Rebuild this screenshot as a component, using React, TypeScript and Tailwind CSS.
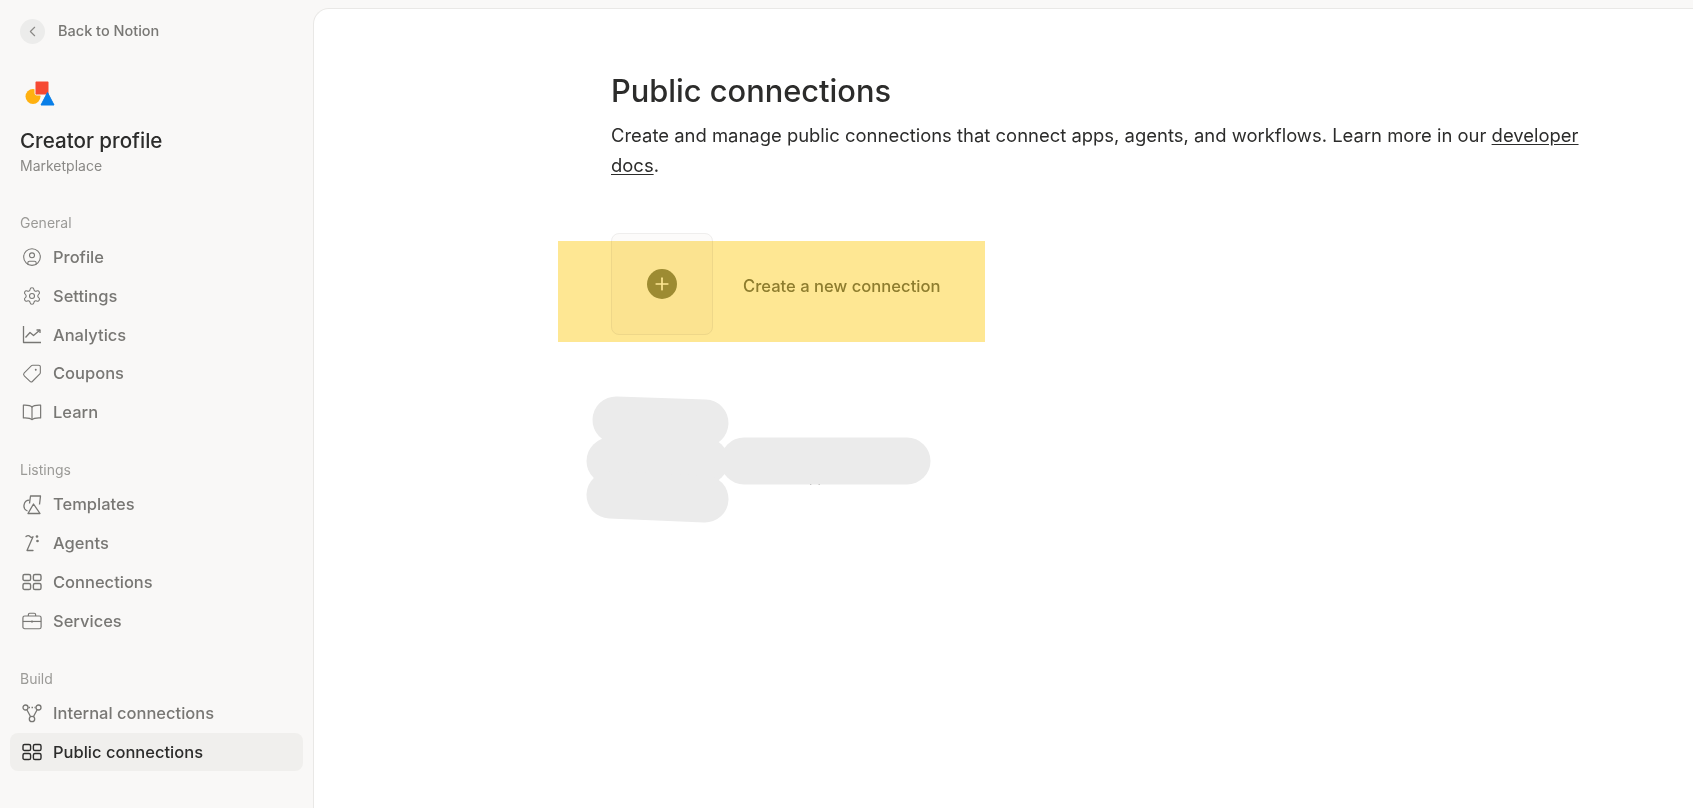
import type { ReactNode } from 'react'
import { ChevronLeft, CircleUser, Plus, Settings, Tag } from 'lucide-react'

const font = "font-['Inter','Noto_Sans',sans-serif]"

function GridIcon() {
  return (
    <svg width="20" height="20" viewBox="0 0 20 20" fill="none" stroke="currentColor" strokeWidth="1.4">
      <rect x="1" y="2.5" width="7.6" height="6" rx="1.6" />
      <rect x="11.4" y="2.5" width="7.6" height="6" rx="1.6" />
      <rect x="1" y="11.5" width="7.6" height="6" rx="1.6" />
      <rect x="11.4" y="11.5" width="7.6" height="6" rx="1.6" />
    </svg>
  )
}

function ChartIcon() {
  return (
    <svg width="20" height="20" viewBox="0 0 20 20" fill="none" stroke="currentColor" strokeWidth="1.3" strokeLinejoin="round">
      <path d="M1.5 1v16.5h17.5" />
      <path d="M3.5 12.5 8 7.5l3.5 3L18 5" />
      <path d="M14.5 5H18v3" />
    </svg>
  )
}

function BookIcon() {
  return (
    <svg width="22" height="20" viewBox="0 0 22 20" fill="none" stroke="currentColor" strokeWidth="1.3" strokeLinejoin="round">
      <path d="M11 4.500C9.500 2.800 6 2.300 1.500 2.500v14c4.500-.2 8 .3 9.500 2 1.500-1.700 5-2.200 9.500-2v-14C16 2.300 12.500 2.800 11 4.500Z" />
      <path d="M11 4.500v14" />
    </svg>
  )
}

function TemplatesIcon() {
  return (
    <svg width="20" height="20" viewBox="0 0 20 20" fill="none" stroke="currentColor" strokeWidth="1.3" strokeLinejoin="round">
      <path d="M7.500 5.200A5.600 5.600 0 0 0 5.500 16" />
      <path d="M7.500 8.500 8.500 1h10l-1 8.500" />
      <path d="M6 18.500 11.500 9l6.500 9.500Z" />
    </svg>
  )
}

function AgentsIcon() {
  return (
    <svg width="20" height="20" viewBox="0 0 20 20" fill="none" stroke="currentColor" strokeWidth="1.3" strokeLinecap="round" strokeLinejoin="round">
      <path d="M4 3.500c1.500-1.300 3-1.300 4 0 1 1.200 2 1.200 3 .2L5 17.500h6" />
      <circle cx="15" cy="3.500" r="0.700" />
      <circle cx="15.500" cy="8" r="0.700" />
    </svg>
  )
}

function BriefcaseIcon() {
  return (
    <svg width="22" height="20" viewBox="0 0 22 20" fill="none" stroke="currentColor" strokeWidth="1.3" strokeLinejoin="round">
      <rect x="1" y="4.500" width="20" height="14" rx="2" />
      <path d="M7 4.500V3a1.500 1.500 0 0 1 1.500-1.500h5A1.500 1.500 0 0 1 15 3v1.500" />
      <path d="M1 10.500h20" />
      <path d="M11 9.500v2.500" />
    </svg>
  )
}

function NodesIcon() {
  return (
    <svg width="20" height="20" viewBox="0 0 20 20" fill="none" stroke="currentColor" strokeWidth="1.3">
      <circle cx="3.500" cy="4.500" r="2.500" />
      <circle cx="16.500" cy="4.500" r="2.500" />
      <circle cx="10" cy="16" r="2.700" />
      <path d="M6.500 4.500h7" strokeDasharray="1.500 1.500" />
      <path d="M5 7l3.500 6.500M15 7l-3.500 6.500" />
    </svg>
  )
}

function NotionShapes() {
  return (
    <svg width="30" height="26" viewBox="0 0 30 26">
      <circle cx="8" cy="16.500" r="7.500" fill="#ffb110" />
      <rect x="10" y="1" width="14" height="14" rx="1.600" fill="#f64932" stroke="#f9f8f7" strokeWidth="1" />
      <path d="M22.500 12.500 29 25H16Z" fill="#097fe8" stroke="#097fe8" strokeWidth="1" strokeLinejoin="round" />
    </svg>
  )
}

function NavRow({ icon, label, active }: { icon: ReactNode; label: string; active?: boolean }) {
  return (
    <div
      className={`flex h-[38.75px] items-center gap-[11px] rounded-lg pl-3 text-[16.5px] font-medium ${
        active ? 'bg-[#f0efed] text-[#2c2c2b]' : 'text-[#787774]'
      }`}
    >
      <span className="flex w-5 justify-center">{icon}</span>
      <span>{label}</span>
    </div>
  )
}

function NavSection({ title, children }: { title: string; children: ReactNode }) {
  return (
    <div className="mb-[28.5px]">
      <p className="mb-[5px] h-5 pl-[10px] text-sm leading-5 text-[#9b9a97]">{title}</p>
      {children}
    </div>
  )
}

export default function App() {
  return (
    <div className={`${font} flex h-[808px] w-[1693px] overflow-hidden bg-[#f9f8f7] pt-2`}>
      <aside className="-mt-2 w-[313px] shrink-0 px-[10px]">
        <div className="flex h-[62px] items-center gap-[13px] pl-[10px]">
          <span className="flex h-[25px] w-[25px] items-center justify-center rounded-full bg-[#ececeb] text-[#8a8986]">
            <ChevronLeft size={17} strokeWidth={1.6} />
          </span>
          <span className="text-[14.5px] font-medium text-[#787774]">Back to Notion</span>
        </div>
        <div className="pl-[15px] pt-[18px]">
          <NotionShapes />
        </div>
        <div className="pl-[10px] pt-[21px]">
          <h2 className="text-[20.6px] leading-7 font-medium text-[#2c2c2b]">Creator profile</h2>
          <p className="mt-px text-sm leading-5 text-[#8a8986]">Marketplace</p>
        </div>
        <div className="mt-[37px]">
          <NavSection title="General">
            <NavRow icon={<CircleUser size={24} strokeWidth={1.3} />} label="Profile" />
            <NavRow icon={<Settings size={24} strokeWidth={1.3} />} label="Settings" />
            <NavRow icon={<ChartIcon />} label="Analytics" />
            <NavRow icon={<Tag size={23} strokeWidth={1.3} className="rotate-90" />} label="Coupons" />
            <NavRow icon={<BookIcon />} label="Learn" />
          </NavSection>
          <NavSection title="Listings">
            <NavRow icon={<TemplatesIcon />} label="Templates" />
            <NavRow icon={<AgentsIcon />} label="Agents" />
            <NavRow icon={<GridIcon />} label="Connections" />
            <NavRow icon={<BriefcaseIcon />} label="Services" />
          </NavSection>
          <NavSection title="Build">
            <NavRow icon={<NodesIcon />} label="Internal connections" />
            <NavRow icon={<GridIcon />} label="Public connections" active />
          </NavSection>
        </div>
      </aside>

      <main className="relative flex-1 rounded-tl-2xl border-t border-l border-[#e9e8e6] bg-white pl-[297px]">
        <h1 className="mt-[62px] text-[30.8px] leading-10 font-medium text-[#2c2c2b]">Public connections</h1>
        <p className="mt-[9px] w-[985px] text-[18.45px] leading-[30px] text-[#2c2c2b]">
          Create and manage public connections that connect apps, agents, and workflows. Learn more in our{' '}
          <span className="underline underline-offset-2">developer docs</span>.
        </p>

        <div className="mt-[53px] flex items-center gap-[30px]">
          <div className="flex h-[102px] w-[102px] items-center justify-center rounded-lg border border-[#efeeed] bg-[#fcfbfa]">
            <span className="flex h-[30px] w-[30px] items-center justify-center rounded-full bg-[#9e9956] text-white">
              <Plus size={20} strokeWidth={2} />
            </span>
          </div>
          <span className="pt-[5px] text-[16.6px] font-medium text-[#8f8a4f]">Create a new connection</span>
        </div>

        {/* yellow highlighter stroke over the card */}
        <div className="absolute top-[232px] left-[244px] h-[101px] w-[427px] bg-[#fee793] mix-blend-multiply" />

        {/* scribbled out row below the card */}
        <p className="absolute top-[458px] left-[495px] text-sm text-[#787774]">pp</p>
        <svg className="absolute top-[380px] left-[261px]" width="400" height="150" fill="none" stroke="#ebebeb" strokeWidth="47" strokeLinecap="round">
          <path d="M41 31 L130 34" />
          <path d="M35 72 L130 72" />
          <path d="M35 106 L130 110" />
          <path d="M169 72 L332 72" />
        </svg>
      </main>
    </div>
  )
}
